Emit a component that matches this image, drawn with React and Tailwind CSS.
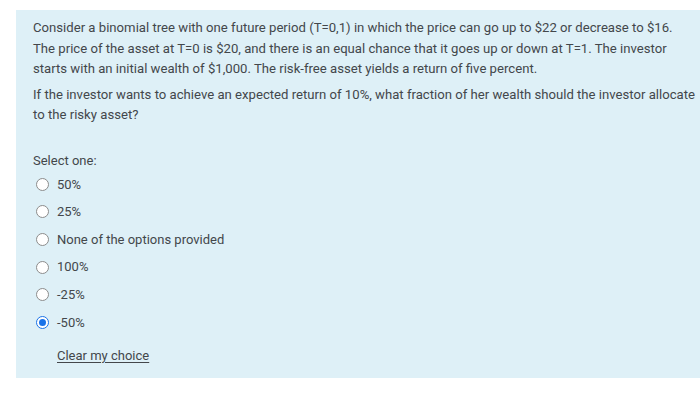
// question card
const options = [
  { label: "50%", checked: false },
  { label: "25%", checked: false },
  { label: "None of the options provided", checked: false },
  { label: "100%", checked: false },
  { label: "-25%", checked: false },
  { label: "-50%", checked: true },
];

function Radio({ checked }) {
  if (checked) {
    return (
      <span className="w-[13px] h-[13px] rounded-full border-[1.5px] border-[#1a73e8] bg-white flex items-center justify-center shrink-0">
        <span className="w-[7px] h-[7px] rounded-full bg-[#1a73e8]" />
      </span>
    );
  }
  return <span className="w-[13px] h-[13px] rounded-full border border-[#8c8c8c] bg-white shrink-0" />;
}

export default function App() {
  return (
    <div className="w-[700px] h-[400px] bg-white pt-[10px] pl-[16px] font-['Roboto',sans-serif] text-[#43474b]">
      <div className="bg-[#def0f7] h-[368px] pl-[17px] pr-[2px] pt-[8px]">
        <p className="text-[13.15px] leading-[20.5px]">
          Consider a binomial tree with one future period (T=0,1) in which the price can go up to $22 or decrease to $16.<br />
          The price of the asset at T=0 is $20, and there is an equal chance that it goes up or down at T=1. The investor<br />
          starts with an initial wealth of $1,000. The risk-free asset yields a return of five percent.
        </p>
        <p className="text-[13.15px] leading-[20.5px] mt-[5px]">
          If the investor wants to achieve an expected return of 10%, what fraction of her wealth should the investor allocate
          to the risky asset?
        </p>

        <p className="text-[13px] leading-[20px] mt-[25px]">Select one:</p>
        <div className="flex flex-col">
          {options.map((o) => (
            <label key={o.label} className="flex items-center h-[27.6px] pl-[3px] gap-[8px] text-[13px]">
              <Radio checked={o.checked} />
              <span>{o.label}</span>
            </label>
          ))}
        </div>
        <a href="#" className="inline-block ml-[24px] mt-[10px] text-[13px] underline underline-offset-2">Clear my choice</a>
      </div>
    </div>
  );
}
